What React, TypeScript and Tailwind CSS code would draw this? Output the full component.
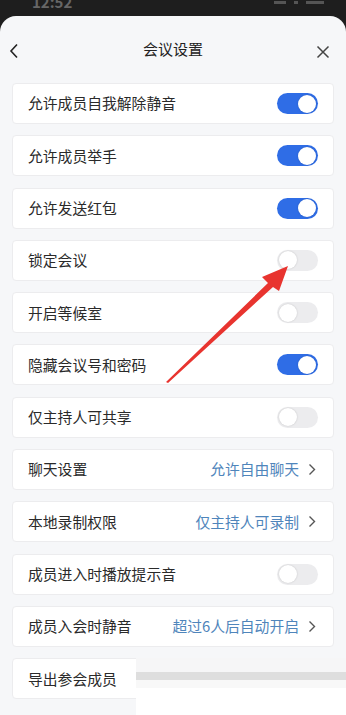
import React from 'react';

type Row =
  | { label: string; kind: 'toggle'; on: boolean }
  | { label: string; kind: 'link'; value: string }
  | { label: string; kind: 'plain' };

const rows: Row[] = [
  { label: '允许成员自我解除静音', kind: 'toggle', on: true },
  { label: '允许成员举手', kind: 'toggle', on: true },
  { label: '允许发送红包', kind: 'toggle', on: true },
  { label: '锁定会议', kind: 'toggle', on: false },
  { label: '开启等候室', kind: 'toggle', on: false },
  { label: '隐藏会议号和密码', kind: 'toggle', on: true },
  { label: '仅主持人可共享', kind: 'toggle', on: false },
  { label: '聊天设置', kind: 'link', value: '允许自由聊天' },
  { label: '本地录制权限', kind: 'link', value: '仅主持人可录制' },
  { label: '成员进入时播放提示音', kind: 'toggle', on: false },
  { label: '成员入会时静音', kind: 'link', value: '超过6人后自动开启' },
  { label: '导出参会成员', kind: 'plain' },
];

function Toggle({ on }: { on: boolean }) {
  return (
    <div
      className={`flex h-[21px] w-[41px] items-center rounded-full px-[2px] ${
        on ? 'justify-end bg-[#2f6de6]' : 'justify-start bg-[#ececee]'
      }`}
    >
      <div className="h-[18px] w-[18px] rounded-full bg-white shadow-[0_0_2px_rgba(0,0,0,0.18)]" />
    </div>
  );
}

function Chevron() {
  return (
    <svg width="8" height="13" viewBox="0 0 8 13" className="ml-[9px]">
      <path d="M1.5 1.5 L6.5 6.5 L1.5 11.5" fill="none" stroke="#555" strokeWidth="1.4" />
    </svg>
  );
}

export default function App() {
  return (
    <div
      className="relative h-[715px] w-[346px] overflow-hidden bg-[#1e1e1e]"
      style={{ fontFamily: '"Noto Sans CJK SC", "Noto Sans", sans-serif' }}
    >
      <div className="flex h-[16px] items-start justify-between overflow-hidden pl-[32px] pr-[22px]">
        <span className="-mt-[6px] text-[15px] font-semibold leading-none text-[#666]">12:52</span>
        <div className="flex items-center gap-[8px] pt-[1px]">
          <div className="h-[3px] w-[12px] bg-[#555]" />
          <div className="h-[3px] w-[4px] bg-[#555]" />
          <div className="h-[3px] w-[18px] bg-[#555]" />
        </div>
      </div>
      <div className="flex h-[699px] flex-col rounded-t-[16px] bg-[#f6f7f9]">
        <div className="relative flex h-[67px] items-center justify-center">
          <svg width="10" height="16" viewBox="0 0 10 16" className="absolute left-[9px] top-[27px]">
            <path d="M8 1.5 L2 8 L8 14.5" fill="none" stroke="#222" strokeWidth="1.6" />
          </svg>
          <span className="text-[15px] text-[#222]">会议设置</span>
          <svg width="14" height="14" viewBox="0 0 14 14" className="absolute right-[16px] top-[29px]">
            <path d="M1.5 1.5 L12.5 12.5 M12.5 1.5 L1.5 12.5" fill="none" stroke="#444" strokeWidth="1.5" />
          </svg>
        </div>
        <div className="flex flex-col gap-[11.3px] px-[12px]">
          {rows.map((row) => (
            <div
              key={row.label}
              className="flex h-[41px] items-center justify-between rounded-[4px] border border-[#ececee] bg-white pl-[15px] pr-[15px]"
            >
              <span className="text-[14.8px] text-[#2a2a2a]">{row.label}</span>
              {row.kind === 'toggle' && <Toggle on={row.on} />}
              {row.kind === 'link' && (
                <div className="flex items-center pr-[2px]">
                  <span className="text-[14.8px] text-[#4f85bb]">{row.value}</span>
                  <Chevron />
                </div>
              )}
            </div>
          ))}
        </div>
      </div>

      {/* screenshot artifact over the last row */}
      <div className="absolute left-[136px] right-0 top-[658px] bottom-0 flex flex-col">
        <div className="h-[14px] bg-[#f6f6f7]" />
        <div className="h-[8px] bg-[#dedede]" />
        <div className="h-[8px] bg-[#f8f8f8]" />
        <div className="flex-1 bg-white" />
      </div>

      {/* red annotation arrow */}
      <svg className="pointer-events-none absolute left-0 top-0" width="346" height="715">
        <polygon points="166,382 268,283 262,277 288,266 279,291 273,287 168,383" fill="#e8342f" />
      </svg>
    </div>
  );
}
